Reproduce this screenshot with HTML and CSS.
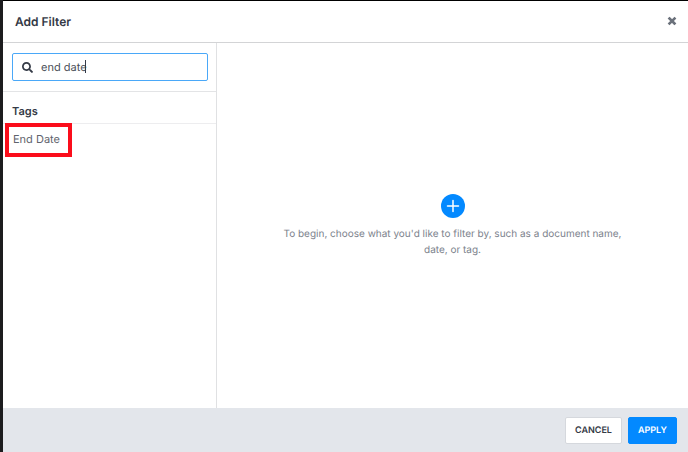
FILE: index.html
```html
<!DOCTYPE html>
<html lang="en">
<head>
    <meta charset="UTF-8">
    <meta name="viewport" content="width=device-width, initial-scale=1.0">
    <title>Add Filter</title>
    <link rel="stylesheet" href="styles.css">
</head>
<body>
    <div class="modal" role="dialog" aria-labelledby="modal-title">
        <header class="modal-header">
            <h1 id="modal-title">Add Filter</h1>
            <button type="button" class="close" aria-label="Close">
                <svg viewBox="0 0 10 10" width="10" height="10">
                    <path d="M2.500 2.500L7.500 7.500M7.500 2.500L2.500 7.500" stroke="currentColor" stroke-width="2.600" stroke-linecap="square"/>
                </svg>
            </button>
        </header>

        <div class="modal-body">
            <aside class="sidebar">
                <div class="search">
                    <label class="search-box">
                        <svg viewBox="0 0 512 512" width="11" height="11" role="img" aria-label="Search">
                            <path fill="currentColor" d="M505 442.700L405.300 343c-4.500-4.500-10.600-7-17-7H372c27.600-35.300 44-79.700 44-128C416 93.100 322.900 0 208 0S0 93.100 0 208s93.100 208 208 208c48.300 0 92.700-16.400 128-44v16.300c0 6.400 2.500 12.500 7 17l99.700 99.700c9.400 9.400 24.600 9.400 33.900 0l28.300-28.300c9.400-9.400 9.400-24.600.1-34zM208 336c-70.700 0-128-57.200-128-128 0-70.700 57.200-128 128-128 70.700 0 128 57.200 128 128 0 70.700-57.200 128-128 128z"/>
                        </svg>
                        <span class="field">
                            <input type="text" value="end date">
                            <span class="caret"></span>
                        </span>
                    </label>
                </div>
                <h2>Tags</h2>
                <ul class="tags">
                    <li><a href="#" class="highlight">End Date</a></li>
                </ul>
            </aside>

            <main class="empty">
                <svg class="plus" viewBox="0 0 24 24" width="24" height="24">
                    <circle cx="12" cy="12" r="12" fill="#0389ff"/>
                    <path d="M12 6.500V17.500M6.500 12H17.500" stroke="#fff" stroke-width="1.500" stroke-linecap="round"/>
                </svg>
                <p>To begin, choose what you'd like to filter by, such as a document name, date, or tag.</p>
            </main>
        </div>

        <footer class="modal-footer">
            <button type="button" class="btn">CANCEL</button>
            <button type="button" class="btn btn-primary">APPLY</button>
        </footer>
    </div>
</body>
</html>
```

FILE: styles.css
```css
* {
    box-sizing: border-box;
}
body {
    margin: 0;
    background: #1c1c1e;
    font-family: Inter, "Liberation Sans", sans-serif;
    font-size: 11px;
    text-rendering: geometricPrecision;
    color: #343a46;
}
.modal {
    display: flex;
    flex-direction: column;
    min-height: 100vh;
    border-top: 1px solid #000;
    margin-left: 3px;
    background: #fff;
}
.modal-header {
    display: flex;
    justify-content: space-between;
    align-items: center;
    height: 42px;
    padding: 0 11px 0 12px;
    border-bottom: 1px solid #d3d4d6;
}
h1 {
    margin: 0;
    font-size: 12px;
    font-weight: 600;
}
.close {
    display: flex;
    padding: 0 0 2px;
    border: none;
    background: none;
    color: #6b717b;
    cursor: pointer;
}
.modal-body {
    display: flex;
    flex: 1;
}
.sidebar {
    width: 214px;
    border-right: 1px solid #e0e1e3;
}
.search {
    padding: 10px 8px 10px 9px;
    border-bottom: 1px solid #e3e4e6;
}
.search-box {
    display: flex;
    align-items: center;
    gap: 8px;
    height: 28px;
    padding: 0 9px;
    border: 1px solid #4aa8f8;
    border-radius: 2px;
}
.field {
    position: relative;
    flex: 1;
}
.field input {
    display: block;
    width: 100%;
    padding: 0;
    border: none;
    outline: none;
    background: none;
    font: inherit;
    text-rendering: inherit;
    color: #4a4f59;
}
.caret {
    position: absolute;
    top: 0;
    left: 44px;
    width: 1px;
    height: 13px;
    background: #343a46;
}
h2 {
    margin: 0;
    padding: 12px 9px 4px;
    border-bottom: 1px solid #ededef;
    font-size: 11px;
    line-height: 15px;
    font-weight: 600;
}
.tags {
    margin: -1px 0 0;
    padding: 0 2px;
    list-style: none;
}
.tags a {
    display: block;
    width: fit-content;
    padding: 5px 8px 6px 4px;
    line-height: 15px;
    color: #5f646d;
    text-decoration: none;
}
.tags .highlight {
    border: 4px solid #fb0d1b;
}
.empty {
    display: flex;
    flex: 1;
    flex-direction: column;
    align-items: center;
    justify-content: center;
    padding: 0 50px;
}
.empty p {
    max-width: 360px;
    margin: 8px 0 0;
    font-size: 10px;
    line-height: 16px;
    text-align: center;
    color: #7c828c;
}
.modal-footer {
    display: flex;
    justify-content: flex-end;
    gap: 6px;
    padding: 9px 11px 8px;
    background: #e3e6eb;
}
.btn {
    height: 27px;
    padding: 0 9px;
    border: 1px solid #d5d8dd;
    border-radius: 2px;
    background: #fff;
    color: #343a46;
    font: 600 9px Inter, "Liberation Sans", sans-serif;
    text-rendering: inherit;
    cursor: pointer;
}
.btn-primary {
    border-color: #0389ff;
    background: #0389ff;
    color: #fff;
}
```
